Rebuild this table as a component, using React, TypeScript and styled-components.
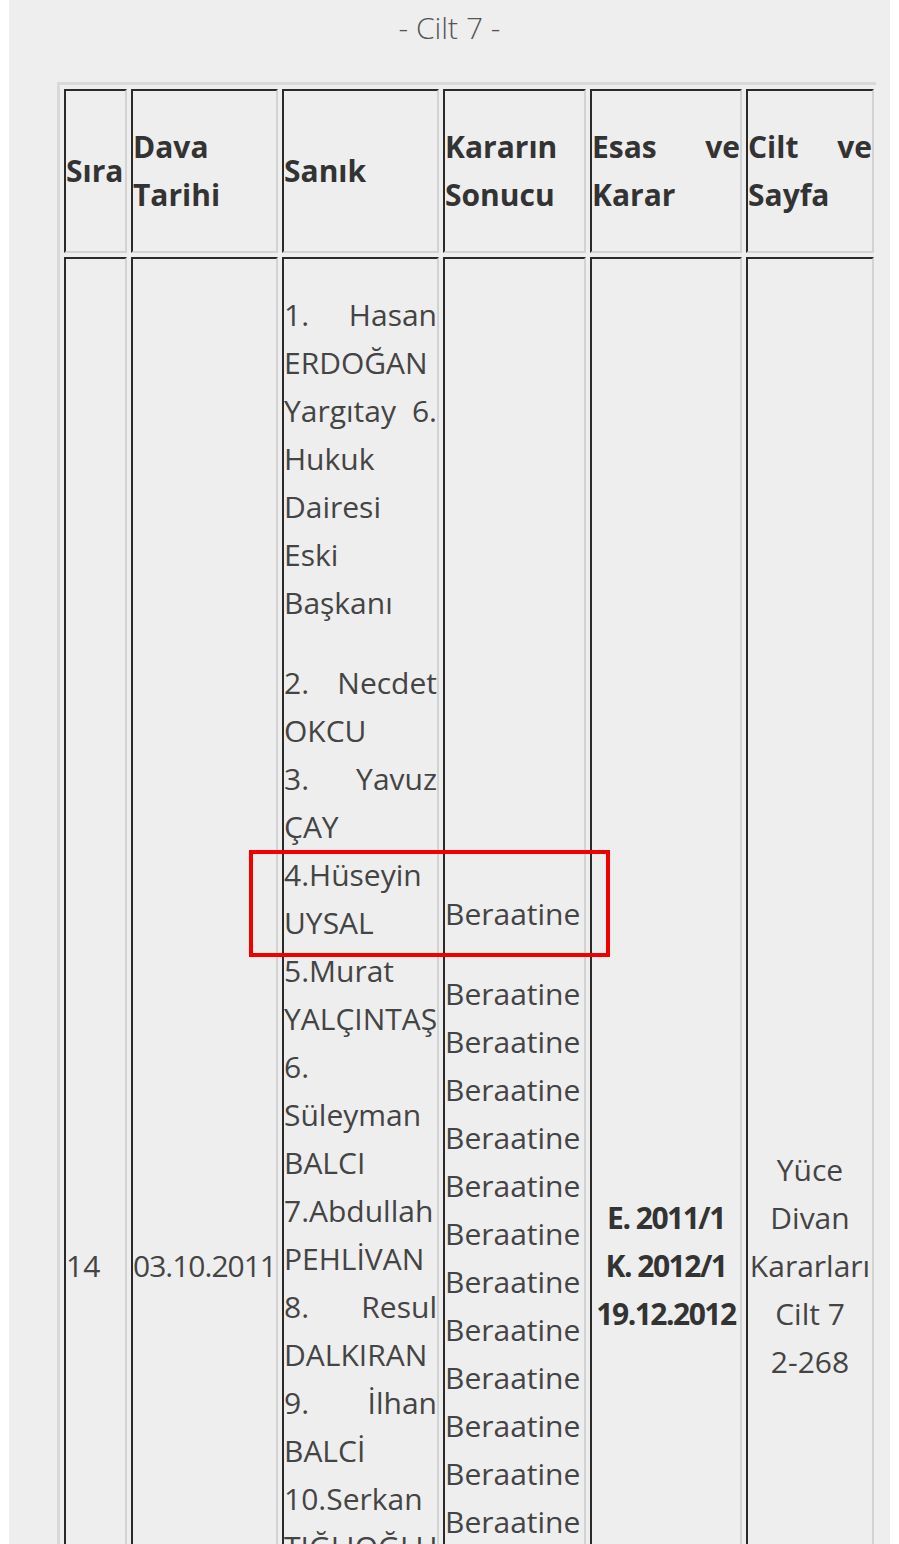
import styled, { createGlobalStyle, css } from "styled-components";

const GlobalStyle = createGlobalStyle`
  html, body {
    margin: 0;
    padding: 0;
    background: #ffffff;
  }
  body {
    font-family: "Open Sans", "Noto Sans", sans-serif;
    color: #444444;
  }
`;

const Page = styled.div`
  position: relative;
  padding: 0 9px;
`;

const Panel = styled.main`
  background: #eeeeee;
  padding-bottom: 40px;
`;

const Title = styled.h2`
  margin: 0 0 30px;
  padding-top: 4px;
  text-align: center;
  font-size: 30px;
  font-weight: 300;
  line-height: 48px;
  color: #555555;
`;

const TableWrap = styled.div`
  margin: 0 14px 0 48px;
  overflow: hidden;
`;

const Table = styled.table`
  box-sizing: border-box;
  width: 824px;
  table-layout: fixed;
  border-collapse: separate;
  border-spacing: 4px;
  border: 3px solid #d9d9d9;
  font-size: 30px;
  line-height: 48px;
`;

const insetBorder = css`
  box-sizing: border-box;
  padding: 0;
  border-style: solid;
  border-width: 2px;
  border-color: #2a2a2a #d3d3d3 #d3d3d3 #2a2a2a;
`;

const HeadCell = styled.th<{ $w: number }>`
  ${insetBorder};
  width: ${(p) => p.$w}px;
  text-align: justify;
  vertical-align: middle;
  font-weight: 700;
  color: #333333;
`;

type Align = "left" | "center" | "justify";

const Cell = styled.td<{
  $align?: Align;
  $top?: boolean;
  $bold?: boolean;
  $tight?: number;
}>`
  ${insetBorder};
  text-align: ${(p) => p.$align ?? "left"};
  vertical-align: ${(p) => (p.$top ? "top" : "middle")};
  font-weight: ${(p) => (p.$bold ? 700 : 400)};
  color: ${(p) => (p.$bold ? "#333333" : "#444444")};
  letter-spacing: ${(p) => (p.$tight ? `-${p.$tight}px` : "normal")};
`;

const Para = styled.p`
  margin: 32px 0;
`;

const NoWrap = styled.span`
  white-space: nowrap;
`;

// tallest column, sets the height of the row
const NameList = styled.div`
  display: flow-root;
  min-height: 2014px;
`;

const Highlight = styled.div`
  position: absolute;
  left: 249px;
  top: 850px;
  width: 361px;
  height: 107px;
  box-sizing: border-box;
  border: 4px solid #f20000;
  pointer-events: none;
`;

const headers = [
  { label: "Sıra", w: 63 },
  { label: "Dava Tarihi", w: 147 },
  { label: "Sanık", w: 157 },
  { label: "Kararın Sonucu", w: 143 },
  { label: "Esas ve Karar", w: 152 },
  { label: "Cilt ve Sayfa", w: 128 },
];

const defendants = [
  "2. Necdet OKCU",
  "3. Yavuz ÇAY",
  "4.Hüseyin UYSAL",
  "5.Murat YALÇINTAŞ",
  "6. Süleyman BALCI",
  "7.Abdullah PEHLİVAN",
  "8. Resul DALKIRAN",
  "9. İlhan BALCİ",
  "10.Serkan TIĞLIOĞLU",
];

const withBreaks = (lines: string[]) =>
  lines.map((line, i) => (
    <span key={i}>
      {line}
      {i < lines.length - 1 && <br />}
    </span>
  ));

export default function App() {
  const verdicts = Array.from({ length: 14 }, () => "Beraatine");

  return (
    <Page>
      <GlobalStyle />
      <Panel>
        <Title>- Cilt 7 -</Title>
        <TableWrap>
          <Table>
            <thead>
              <tr>
                {headers.map((h) => (
                  <HeadCell key={h.label} $w={h.w}>
                    <Para>{h.label}</Para>
                  </HeadCell>
                ))}
              </tr>
            </thead>
            <tbody>
              <tr>
                <Cell>14</Cell>
                <Cell $tight={1}>03.10.2011</Cell>
                <Cell $align="justify" $top>
                  <NameList>
                    <Para>
                      1. Hasan ERDOĞAN Yargıtay 6. Hukuk Dairesi Eski Başkanı
                    </Para>
                    <Para>{withBreaks(defendants)}</Para>
                  </NameList>
                </Cell>
                <Cell>
                  <Para>Beraatine</Para>
                  <Para>{withBreaks(verdicts)}</Para>
                </Cell>
                <Cell $align="center" $bold $tight={1.5}>
                  <Para>
                    E. 2011/1
                    <br />
                    K. 2012/1
                    <br />
                    19.12.2012
                  </Para>
                </Cell>
                <Cell $align="center">
                  <Para>
                    Yüce Divan Kararları Cilt 7 <NoWrap>2-268</NoWrap>
                  </Para>
                </Cell>
              </tr>
            </tbody>
          </Table>
        </TableWrap>
      </Panel>
      <Highlight />
    </Page>
  );
}
